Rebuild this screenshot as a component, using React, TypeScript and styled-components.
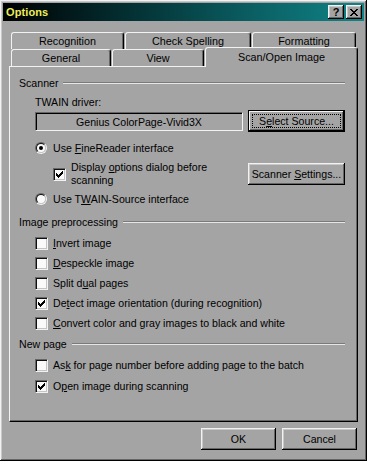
import React from "react";
import styled, { createGlobalStyle, css } from "styled-components";

const GlobalStyle = createGlobalStyle`
  html, body { margin: 0; padding: 0; background: #a4a4a4; }
  body { font-family: "Liberation Sans", Arial, sans-serif; font-size: 10.6px; color: #000; }
  * { box-sizing: border-box; }
`;

const FACE = "#a4a4a4";
const LIGHT = "#f2f2f2";
const SHADOW = "#666666";

const raised = css`
  background: ${FACE};
  box-shadow: inset -1px -1px #000, inset 1px 1px ${LIGHT}, inset -2px -2px ${SHADOW}, inset 2px 2px #c8c8c8;
`;

const Window = styled.div`
  width: 367px;
  height: 461px;
  padding: 3px;
  display: flex;
  flex-direction: column;
  ${raised};
`;

const TitleBar = styled.div`
  height: 18px;
  flex: none;
  display: flex;
  align-items: center;
  padding: 0 2px 0 3px;
  background: linear-gradient(90deg, #000000 0%, #03292c 30%, #0a6064 70%, #108486 100%);
`;

const Title = styled.span`
  flex: 1;
  color: #eeee5a;
  font-weight: bold;
  font-size: 11px;
  letter-spacing: 0.1px;
`;

const TitleButton = styled.button<{ $gap?: number }>`
  width: 16px;
  height: 14px;
  padding: 0;
  margin-left: ${(p) => p.$gap ?? 0}px;
  border: none;
  display: flex;
  align-items: center;
  justify-content: center;
  font-family: "Liberation Sans", Arial, sans-serif;
  font-weight: bold;
  font-size: 11px;
  line-height: 1;
  color: #000;
  ${raised};
`;

const TabArea = styled.div`
  margin: 11px 0 0 6px;
  display: flex;
  flex-direction: column;
`;

const TabRow = styled.div`
  height: 17px;
  display: flex;
  align-items: flex-end;
  gap: 1px;
  padding-left: 2px;
`;

const Tab = styled.div<{ $w: number; $active?: boolean }>`
  width: ${(p) => p.$w}px;
  height: ${(p) => (p.$active ? 20 : 17)}px;
  margin-bottom: ${(p) => (p.$active ? -1 : 0)}px;
  position: relative;
  z-index: ${(p) => (p.$active ? 2 : 0)};
  background: ${FACE};
  border-top: 1px solid ${LIGHT};
  border-left: 1px solid ${LIGHT};
  border-right: 1px solid #000;
  border-radius: 3px 3px 0 0;
  box-shadow: inset -1px 0 ${SHADOW};
  display: flex;
  justify-content: center;
  padding-top: ${(p) => (p.$active ? 3 : 2)}px;
  font-size: 10.8px;
  white-space: nowrap;
`;

const Panel = styled.div`
  margin-left: 6px;
  width: 349px;
  height: 356px;
  position: relative;
  z-index: 1;
  padding: 9px 12px 0 9px;
  display: flex;
  flex-direction: column;
  border-top: 1px solid ${LIGHT};
  border-left: 1px solid ${LIGHT};
  border-right: 1px solid #000;
  border-bottom: 1px solid #000;
  box-shadow: inset -1px -1px ${SHADOW};
`;

const SectionTitle = styled.div<{ $mt?: number }>`
  display: flex;
  align-items: center;
  height: 14px;
  margin-top: ${(p) => p.$mt ?? 0}px;
  white-space: nowrap;
  &::after {
    content: "";
    flex: 1;
    margin-left: 5px;
    height: 0;
    border-top: 1px solid #7a7a7a;
    border-bottom: 1px solid #e6e6e6;
  }
`;

const Indented = styled.div<{ $mt?: number; $gap?: number }>`
  padding-left: 16px;
  margin-top: ${(p) => p.$mt ?? 0}px;
  display: flex;
  flex-direction: column;
  gap: ${(p) => p.$gap ?? 0}px;
`;

const Label = styled.div`
  height: 14px;
  line-height: 14px;
  white-space: nowrap;
`;

const FieldRow = styled.div<{ $mt?: number }>`
  display: flex;
  align-items: center;
  gap: 5px;
  margin-top: ${(p) => p.$mt ?? 0}px;
`;

const ReadOnlyField = styled.div`
  width: 210px;
  height: 19px;
  background: ${FACE};
  border-top: 1px solid ${SHADOW};
  border-left: 1px solid ${SHADOW};
  border-right: 1px solid ${LIGHT};
  border-bottom: 1px solid ${LIGHT};
  box-shadow: inset 1px 1px #000;
  display: flex;
  align-items: center;
  justify-content: center;
  padding-top: 1px;
  white-space: nowrap;
`;

const Button = styled.button<{ $w: number; $default?: boolean }>`
  width: ${(p) => p.$w}px;
  height: 22px;
  padding: 0;
  flex: none;
  border: none;
  font-family: "Liberation Sans", Arial, sans-serif;
  font-size: 10.6px;
  color: #000;
  display: flex;
  align-items: center;
  justify-content: center;
  position: relative;
  white-space: nowrap;
  ${(p) =>
    p.$default
      ? css`
          background: ${FACE};
          box-shadow: inset 0 0 0 1px #000, inset -2px -2px #000, inset 2px 2px ${LIGHT}, inset -3px -3px ${SHADOW};
        `
      : raised};
`;

const FocusRing = styled.span`
  position: absolute;
  inset: 4px;
  border: 1px dotted #000;
  pointer-events: none;
`;

const Option = styled.div<{ $mt?: number }>`
  display: flex;
  align-items: center;
  height: 14px;
  gap: 5px;
  margin-top: ${(p) => p.$mt ?? 0}px;
  white-space: nowrap;
`;

const CheckBox = styled.span`
  width: 13px;
  height: 13px;
  flex: none;
  background: #fafafa;
  border-top: 1px solid ${SHADOW};
  border-left: 1px solid ${SHADOW};
  border-right: 1px solid ${LIGHT};
  border-bottom: 1px solid ${LIGHT};
  box-shadow: inset 1px 1px #111, inset -1px -1px #c4c4c4;
  display: flex;
  align-items: center;
  justify-content: center;
`;

const RadioOuter = styled.span`
  width: 12px;
  height: 12px;
  flex: none;
  margin-right: 1px;
  border-radius: 50%;
  border: 1px solid;
  border-color: ${SHADOW} ${LIGHT} ${LIGHT} ${SHADOW};
  display: flex;
`;

const RadioInner = styled.span<{ $on?: boolean }>`
  flex: 1;
  border-radius: 50%;
  border: 1px solid;
  border-color: #111 #c4c4c4 #c4c4c4 #111;
  background: #fafafa;
  display: flex;
  align-items: center;
  justify-content: center;
  &::after {
    content: "";
    width: 4px;
    height: 4px;
    border-radius: 50%;
    background: ${(p) => (p.$on ? "#000" : "transparent")};
  }
`;

const DisplayRow = styled.div<{ $mt?: number }>`
  display: flex;
  align-items: center;
  justify-content: space-between;
  margin-top: ${(p) => p.$mt ?? 0}px;
  height: 26px;
`;

const SubOption = styled.div`
  display: flex;
  align-items: center;
  gap: 5px;
  padding-left: 18px;
`;

const TwoLine = styled.div`
  line-height: 13px;
`;

const ButtonRow = styled.div`
  display: flex;
  justify-content: flex-end;
  gap: 6px;
  margin-top: 6px;
  padding-right: 7px;
`;

const CheckMark = () => (
  <svg width="7" height="7" viewBox="0 0 7 7" shapeRendering="crispEdges">
    <rect x="0" y="2" width="1" height="3" fill="#000" />
    <rect x="1" y="3" width="1" height="3" fill="#000" />
    <rect x="2" y="4" width="1" height="3" fill="#000" />
    <rect x="3" y="3" width="1" height="3" fill="#000" />
    <rect x="4" y="2" width="1" height="3" fill="#000" />
    <rect x="5" y="1" width="1" height="3" fill="#000" />
    <rect x="6" y="0" width="1" height="3" fill="#000" />
  </svg>
);

const Check: React.FC<{ on?: boolean }> = ({ on }) => <CheckBox>{on && <CheckMark />}</CheckBox>;

const Radio: React.FC<{ on?: boolean }> = ({ on }) => (
  <RadioOuter>
    <RadioInner $on={on} />
  </RadioOuter>
);

const CloseGlyph = () => (
  <svg width="8" height="7" viewBox="0 0 8 7" shapeRendering="crispEdges">
    {[0, 1, 2, 3, 4, 5, 6].map((i) => (
      <React.Fragment key={i}>
        <rect x={i} y={i} width="2" height="1" fill="#000" />
        <rect x={6 - i} y={i} width="2" height="1" fill="#000" />
      </React.Fragment>
    ))}
  </svg>
);

export default function App() {
  return (
    <>
      <GlobalStyle />
      <Window>
        <TitleBar>
          <Title>Options</Title>
          <TitleButton>?</TitleButton>
          <TitleButton $gap={2}>
            <CloseGlyph />
          </TitleButton>
        </TitleBar>

        <TabArea>
          <TabRow>
            <Tab $w={113}>Recognition</Tab>
            <Tab $w={126}>Check Spelling</Tab>
            <Tab $w={104}>Formatting</Tab>
          </TabRow>
          <TabRow>
            <Tab $w={100}>General</Tab>
            <Tab $w={92}>View</Tab>
            <Tab $w={153} $active>
              Scan/Open Image
            </Tab>
          </TabRow>
        </TabArea>

        <Panel>
          <SectionTitle>Scanner</SectionTitle>
          <Indented $mt={5}>
            <Label>TWAIN driver:</Label>
            <FieldRow $mt={1}>
              <ReadOnlyField>Genius ColorPage-Vivid3X</ReadOnlyField>
              <Button $w={97} $default>
                <FocusRing />
                <span>
                  S<u>e</u>lect Source...
                </span>
              </Button>
            </FieldRow>
            <Option $mt={9}>
              <Radio on />
              <span>
                Use <u>F</u>ineReader interface
              </span>
            </Option>
            <DisplayRow $mt={6}>
              <SubOption>
                <Check on />
                <TwoLine>
                  Display <u>o</u>ptions dialog before
                  <br />
                  scanning
                </TwoLine>
              </SubOption>
              <Button $w={97}>
                <span>
                  Scanner <u>S</u>ettings...
                </span>
              </Button>
            </DisplayRow>
            <Option $mt={5}>
              <Radio />
              <span>
                Use T<u>W</u>AIN-Source interface
              </span>
            </Option>
          </Indented>

          <SectionTitle $mt={9}>Image preprocessing</SectionTitle>
          <Indented $mt={7} $gap={6}>
            <Option>
              <Check />
              <span>
                <u>I</u>nvert image
              </span>
            </Option>
            <Option>
              <Check />
              <span>
                <u>D</u>especkle image
              </span>
            </Option>
            <Option>
              <Check />
              <span>
                Split d<u>u</u>al pages
              </span>
            </Option>
            <Option>
              <Check on />
              <span>
                De<u>t</u>ect image orientation (during recognition)
              </span>
            </Option>
            <Option>
              <Check />
              <span>
                <u>C</u>onvert color and gray images to black and white
              </span>
            </Option>
          </Indented>

          <SectionTitle $mt={7}>New page</SectionTitle>
          <Indented $mt={7} $gap={7}>
            <Option>
              <Check />
              <span>
                As<u>k</u> for page number before adding page to the batch
              </span>
            </Option>
            <Option>
              <Check on />
              <span>
                O<u>p</u>en image during scanning
              </span>
            </Option>
          </Indented>
        </Panel>

        <ButtonRow>
          <Button $w={75}>OK</Button>
          <Button $w={75}>Cancel</Button>
        </ButtonRow>
      </Window>
    </>
  );
}
